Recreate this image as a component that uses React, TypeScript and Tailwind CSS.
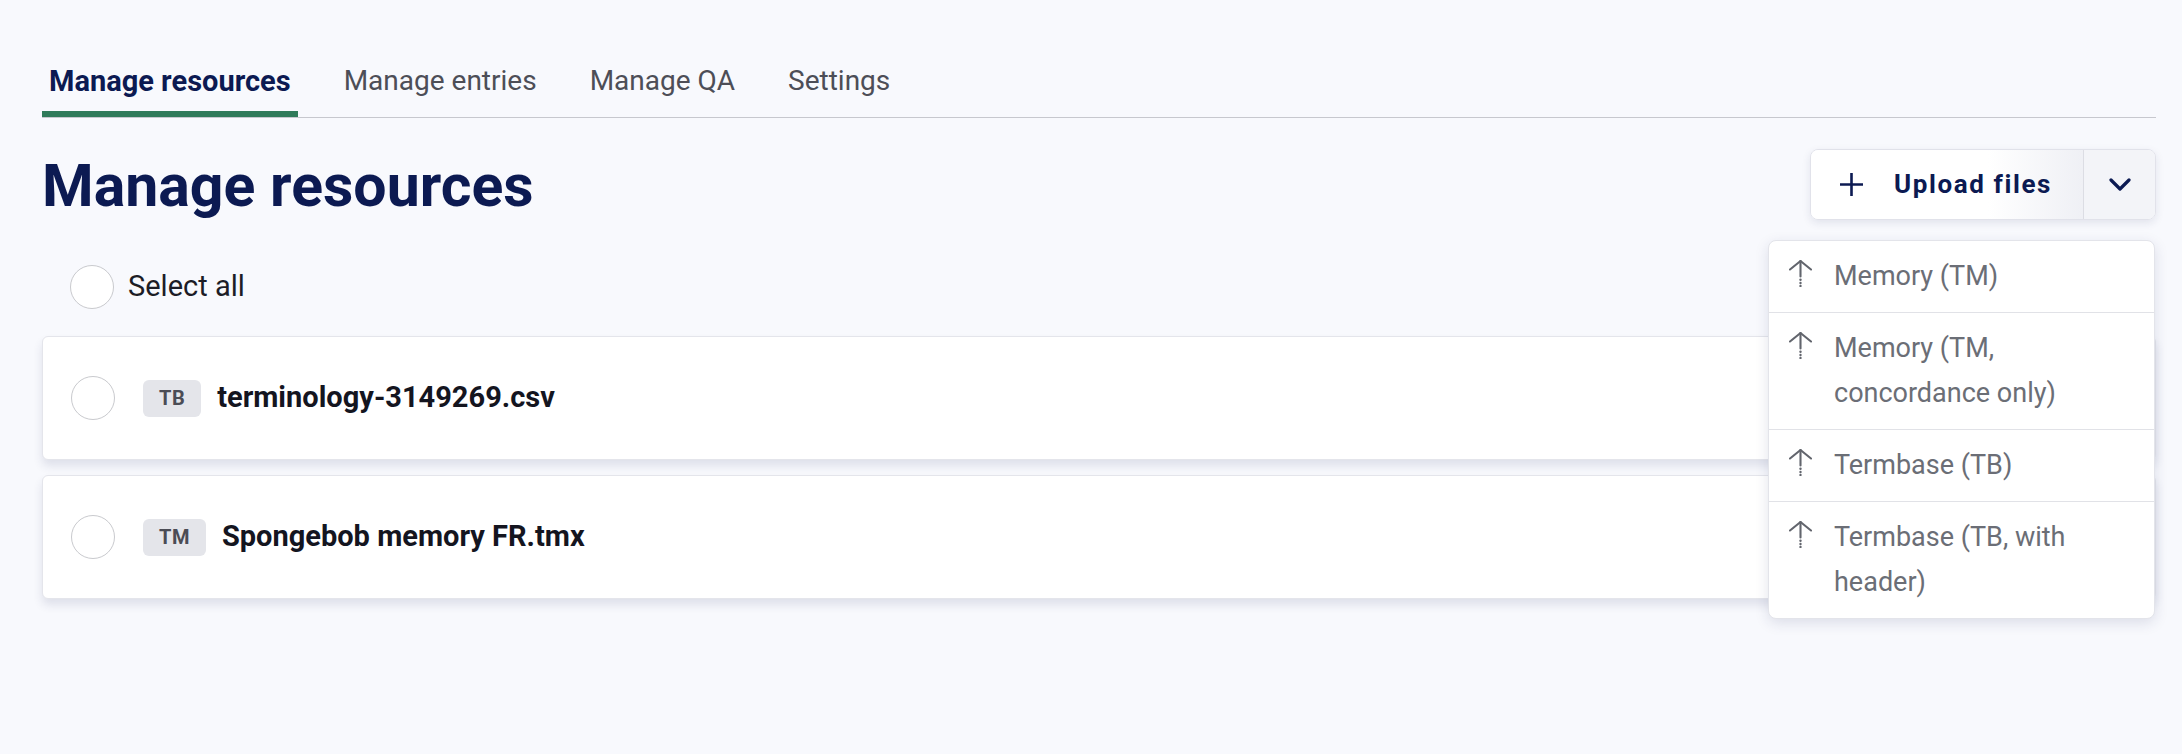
import { useState } from "react";

const tabs = ["Manage resources", "Manage entries", "Manage QA", "Settings"];

const resources = [
  { id: 1, kind: "TB", name: "terminology-3149269.csv" },
  { id: 2, kind: "TM", name: "Spongebob memory FR.tmx" },
];

const uploadOptions = [
  "Memory (TM)",
  "Memory (TM, concordance only)",
  "Termbase (TB)",
  "Termbase (TB, with header)",
];

function UploadArrow() {
  return (
    <svg width="23" height="27" viewBox="0 0 23 27" fill="none" className="mt-[6px] shrink-0 text-[#62656d]">
      <polyline points="1,9.5 11.5,1 22,9.5" stroke="currentColor" strokeWidth="2.1" strokeLinecap="round" strokeLinejoin="round" />
      <line x1="11.5" y1="1" x2="11.5" y2="16.5" stroke="currentColor" strokeWidth="2.1" strokeLinecap="round" />
      <circle cx="11.5" cy="19.7" r="1.2" fill="currentColor" />
      <circle cx="11.5" cy="23" r="1.2" fill="currentColor" />
      <circle cx="11.5" cy="26" r="1.2" fill="currentColor" />
    </svg>
  );
}

function Circle() {
  return <span className="block w-[44px] h-[44px] rounded-full border border-[#c9cace] bg-white shrink-0" />;
}

export default function App() {
  const [active, setActive] = useState(0);

  return (
    <div className="min-h-screen bg-[#f8f9fd] font-['Roboto',sans-serif] pl-[42px] pr-[26px] pt-[64px]">
      {/* Tabs */}
      <nav className="flex gap-[39px] border-b border-[#c7c8ce]">
        {tabs.map((tab, i) => (
          <button
            key={tab}
            onClick={() => setActive(i)}
            className={
              i === active
                ? "px-[7px] pb-[13px] border-b-[6px] border-[#2f7b5a] text-[29px] leading-[34px] font-bold text-[#0c1a52]"
                : "px-[7px] pb-[13px] border-b-[6px] border-transparent text-[28px] leading-[34px] text-[#4d4e57]"
            }
          >
            {tab}
          </button>
        ))}
      </nav>

      {/* Header */}
      <div className="mt-[31px] flex items-start justify-between">
        <h1 className="mt-[1px] text-[59px] leading-[71px] font-bold text-[#0c1a52]">Manage resources</h1>

        <div className="relative">
          <div className="flex h-[71px] rounded-[8px] border border-[#e1e2ea] shadow-[0_3px_8px_rgba(30,40,90,0.10)] overflow-hidden">
            <button className="flex items-center gap-[30px] pl-[28px] pr-[31px] bg-[linear-gradient(90deg,#ffffff_65%,#eff0f5)] text-[#0c1a52]">
              <svg width="25" height="25" viewBox="0 0 25 25" fill="none">
                <line x1="12.5" y1="1" x2="12.5" y2="24" stroke="currentColor" strokeWidth="2.6" />
                <line x1="1" y1="12.5" x2="24" y2="12.5" stroke="currentColor" strokeWidth="2.6" />
              </svg>
              <span className="text-[26px] font-bold tracking-[1.6px]">Upload files</span>
            </button>
            <button className="w-[72px] flex items-center justify-center border-l border-[#dcdde4] bg-[#f3f4f8] text-[#0c1a52]">
              <svg width="22" height="13" viewBox="0 0 22 13" fill="none">
                <polyline points="2,2 11,11 20,2" stroke="currentColor" strokeWidth="3.2" strokeLinecap="round" strokeLinejoin="round" />
              </svg>
            </button>
          </div>

          {/* Upload menu */}
          <ul className="absolute right-[1px] top-[91px] z-10 w-[387px] rounded-[8px] border border-[#e3e4ea] bg-white shadow-[0_4px_14px_rgba(30,40,90,0.13)]">
            {uploadOptions.map((opt, i) => (
              <li
                key={opt}
                className={
                  i === 0
                    ? "flex items-start gap-[22px] pl-[20px] pr-[30px] py-[13px]"
                    : "flex items-start gap-[22px] pl-[20px] pr-[30px] py-[13px] border-t border-[#e1e2e7]"
                }
              >
                <UploadArrow />
                <span className="text-[27px] leading-[45px] text-[#6b6e76]">{opt}</span>
              </li>
            ))}
          </ul>
        </div>
      </div>

      {/* Select all */}
      <label className="mt-[44px] flex items-center gap-[14px] pl-[28px]">
        <Circle />
        <span className="text-[29px] text-[#1c1d26]">Select all</span>
      </label>

      {/* Resource cards */}
      <div className="mt-[27px] flex flex-col gap-[15px]">
        {resources.map((r) => (
          <div
            key={r.id}
            className="h-[124px] flex items-center pl-[28px] rounded-[6px] border border-[#e4e5eb] bg-white shadow-[0_6px_10px_rgba(40,50,100,0.12)]"
          >
            <Circle />
            <span className="ml-[28px] px-[16px] h-[37px] leading-[37px] rounded-[6px] bg-[#e4e5ea] text-[20px] font-bold tracking-[0.5px] text-[#4b4c55]">
              {r.kind}
            </span>
            <span className="ml-[16px] text-[29px] font-bold text-[#14151f]">{r.name}</span>
          </div>
        ))}
      </div>
    </div>
  );
}
